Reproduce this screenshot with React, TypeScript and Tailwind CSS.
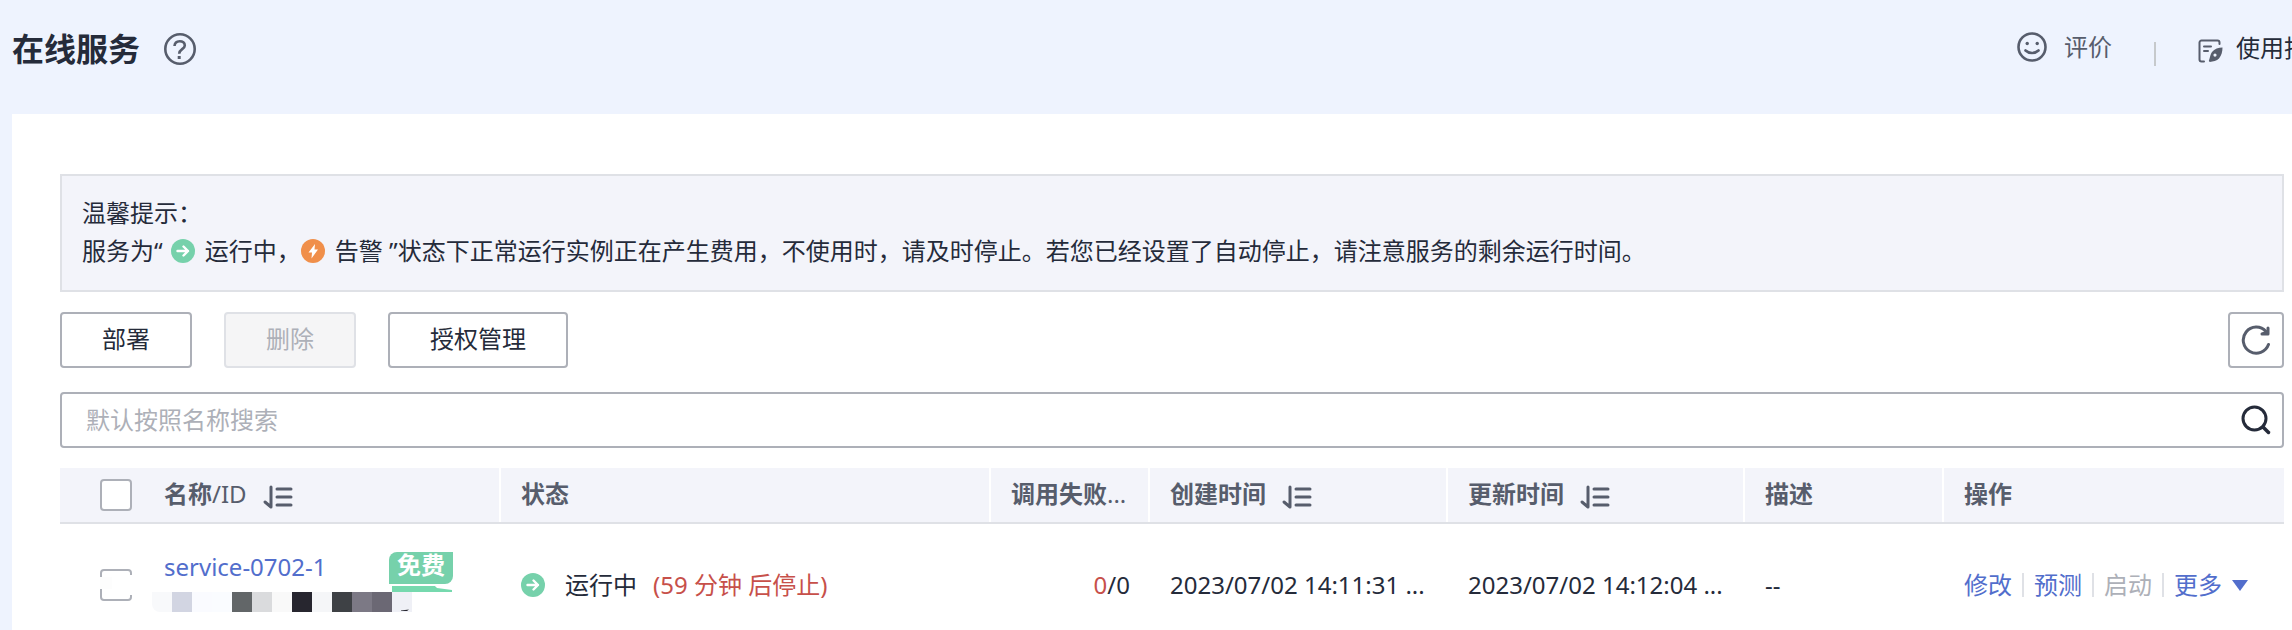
import React, { useState } from 'react';

const COLUMNS = [
  { key: 'status', title: '状态', sortable: false },
  { key: 'failed', title: '调用失败', sortable: false },
  { key: 'created', title: '创建时间', sortable: true },
  { key: 'updated', title: '更新时间', sortable: true },
  { key: 'desc', title: '描述', sortable: false },
  { key: 'action', title: '操作', sortable: false },
];

// 脱敏后的 ID 色块
const MASK_BLOCKS = [
  '#f8f9fb', '#d2d5e2', '#fafbff', '#fafcff', '#626668', '#dadbdd', '#f9f9f9',
  '#27262f', '#f5f6f8', '#3e4145', '#7c7985', '#6b6874',
];

const RunningIcon: React.FC = () => (
  <svg className="w-6 h-6 shrink-0" viewBox="0 0 24 24" fill="none" aria-hidden="true">
    <circle cx="12" cy="12" r="12" fill="#76d1ab" />
    <path d="M6.500 12h10.500M12.500 7.500 17 12l-4.500 4.500" stroke="#fff" strokeWidth="2.400" strokeLinecap="round" strokeLinejoin="round" />
  </svg>
);

const AlarmIcon: React.FC = () => (
  <svg className="w-6 h-6 shrink-0" viewBox="0 0 24 24" aria-hidden="true">
    <circle cx="12" cy="12" r="12" fill="#f08f4a" />
    <path d="M14 5 7.500 13.500h3.500L10.500 19.500 17 10.500h-3.500z" fill="#fff" />
  </svg>
);

const SortIcon: React.FC = () => (
  <svg className="w-8 h-6 mt-1" viewBox="0 0 32 24" fill="none" stroke="#575d6c" strokeWidth="3" strokeLinecap="round" strokeLinejoin="round" aria-hidden="true">
    <path d="M10 2v20L4 17" />
    <path d="M16 4h14M16 12h14M16 20h14" />
  </svg>
);

const Divider: React.FC = () => <span className="w-[2px] h-6 bg-[#dfe1e6]"></span>;

const App: React.FC = () => {
  const [keyword, setKeyword] = useState('');

  return (
    <div className="min-h-screen flex flex-col overflow-hidden bg-[#eef3fe] pl-3 text-2xl text-[#252b3a] font-['Noto_Sans','Noto_Sans_CJK_SC',sans-serif]">
      {/* 顶部 */}
      <header className="h-[114px] pt-6 flex items-start justify-between">
        <div className="flex items-center h-[50px] gap-6">
          <h1 className="text-[32px] leading-12 font-bold">在线服务</h1>
          <button type="button" aria-label="帮助">
            <svg className="w-8 h-8" viewBox="0 0 32 32" fill="none" stroke="#575d6c" strokeWidth="2.600" aria-hidden="true">
              <circle cx="16" cy="16" r="14.700" />
              <path d="M10.500 13c.2-3 2.200-4.800 5.200-4.800s5.100 1.700 5.100 4.200c0 3.800-5.600 3.800-5.600 8.300" />
              <path d="M13.700 24.500h3" strokeWidth="3" />
            </svg>
          </button>
        </div>
        <div className="flex items-center h-12 shrink-0">
          <button type="button" className="flex items-center gap-4 pb-[2px] text-[#575d6c]">
            <svg className="w-8 h-8" viewBox="0 0 32 32" fill="none" stroke="#575d6c" strokeWidth="2.600" strokeLinecap="round" aria-hidden="true">
              <circle cx="16" cy="16" r="13.500" />
              <path d="M9.500 19.500c3.500 3.300 9.500 3.300 13 0" />
              <circle cx="11.200" cy="12.500" r="1.700" fill="#575d6c" stroke="none" />
              <circle cx="21.200" cy="12.500" r="1.700" fill="#575d6c" stroke="none" />
            </svg>
            评价
          </button>
          <span className="w-[2px] h-6 mt-3 mx-[42px] bg-[#c6c9cc]"></span>
          <a href="#guide" className="flex items-center gap-3 w-[94px] whitespace-nowrap">
            <svg className="w-[26px] h-6 mt-[6px] shrink-0" viewBox="0 0 26 24" fill="none" aria-hidden="true">
              <path d="M6 22.500H3.500a2 2 0 0 1-2-2v-17a2 2 0 0 1 2-2h16a2 2 0 0 1 2 2V5" stroke="#575d6c" strokeWidth="2" strokeLinecap="round" />
              <path d="M6 7.500h7M6 12h4" stroke="#575d6c" strokeWidth="2" strokeLinecap="round" />
              <path fillRule="evenodd" d="M24.500 8.500c-4 0-8 1.200-10.500 4.500-1.600 2.200-2 5.500-3.200 9l1 1c3.200-.7 7-1 9.200-3.500 2.500-3 3.500-7 3.500-11zM17 14.500a1.600 1.600 0 1 1 0 3.200 1.600 1.600 0 0 1 0-3.200z" fill="#575d6c" />
            </svg>
            使用指南
          </a>
        </div>
      </header>

      <main className="flex-1 bg-white pl-12 pr-2 pt-[60px]">
        <section className="h-[118px] px-5 pt-[18px] border-2 border-[#dfe1e6] bg-[#f3f4fa] leading-[38px]">
          <p>温馨提示：</p>
          <p className="flex items-center whitespace-pre">
            服务为“ <span className="ml-[2px]"><RunningIcon /></span>
            <span className="ml-[10px]">运行中，</span>
            <AlarmIcon />
            <span className="ml-[10px]">告警 ”状态下正常运行实例正在产生费用，不使用时，请及时停止。若您已经设置了自动停止，请注意服务的剩余运行时间。</span>
          </p>
        </section>

        {/* 工具栏 */}
        <div className="mt-5 flex items-center gap-8">
          <button type="button" className="h-14 px-10 pb-[2px] border-2 border-[#adb0b8] rounded bg-white">部署</button>
          <button type="button" disabled className="h-14 px-10 pb-[2px] border-2 border-[#dfe1e6] rounded bg-[#f5f5f6] text-[#adb0b8]">删除</button>
          <button type="button" className="h-14 px-10 pb-[2px] border-2 border-[#adb0b8] rounded bg-white">授权管理</button>
          <button type="button" aria-label="刷新" className="ml-auto w-14 h-14 flex items-center justify-center border-2 border-[#adb0b8] rounded">
            <svg className="w-8 h-8" viewBox="0 0 32 32" fill="none" stroke="#575d6c" strokeWidth="3" strokeLinecap="round" strokeLinejoin="round" aria-hidden="true">
              <path d="M28.500 20.500A13 13 0 1 1 26 7.500" />
              <path d="M28 4v6h-6l6-2" />
            </svg>
          </button>
        </div>

        <div className="mt-6 h-14 flex items-center border-2 border-[#adb0b8] rounded">
          <input
            type="text"
            aria-label="搜索"
            value={keyword}
            onChange={(e) => setKeyword(e.target.value)}
            placeholder="默认按照名称搜索"
            className="flex-1 h-full pl-6 pb-[2px] outline-none placeholder:text-[#adb0b8]"
          />
          <button type="button" aria-label="查询" className="px-[10px]">
            <svg className="w-8 h-8" viewBox="0 0 32 32" fill="none" stroke="#252b3a" strokeWidth="3" strokeLinecap="round" aria-hidden="true">
              <circle cx="14.500" cy="14.500" r="11.500" />
              <path d="m23 23 5.500 5.500" strokeWidth="3.500" />
            </svg>
          </button>
        </div>

        {/* 服务列表 */}
        <table className="mt-5 w-full table-fixed border-separate border-spacing-0 text-left whitespace-nowrap">
          <colgroup>
            <col className="w-[104px]" />
            <col className="w-[337px]" />
            <col className="w-[490px]" />
            <col className="w-[159px]" />
            <col className="w-[298px]" />
            <col className="w-[297px]" />
            <col className="w-[199px]" />
            <col />
          </colgroup>
          <thead>
            <tr className="h-14 bg-[#f3f4fa] text-[#575d6c]">
              <th className="p-0 pl-10 border-b-2 border-[#dfe1e6]">
                <input type="checkbox" aria-label="全选" className="block w-8 h-8 appearance-none border-2 border-[#adb0b8] rounded bg-white" />
              </th>
              <th className="p-0 font-bold border-b-2 border-[#dfe1e6]">
                <div className="flex items-center justify-between">
                  <button type="button" className="flex items-center gap-[14px]">
                    <span className="pb-[2px]">名称<span className="font-normal">/ID</span></span>
                    <SortIcon />
                  </button>
                  <span className="w-[2px] h-[54px] bg-white"></span>
                </div>
              </th>
              {COLUMNS.map((col, idx) => (
                <th key={col.key} className="p-0 font-bold border-b-2 border-[#dfe1e6]">
                  <div className="flex items-center justify-between h-[54px] pl-5">
                    {col.sortable ? (
                      <button type="button" className="flex items-center gap-[14px]">
                        <span className="pb-[2px]">{col.title}</span>
                        <SortIcon />
                      </button>
                    ) : (
                      <span className="pb-[2px]">
                        {col.title}
                        {col.key === 'failed' && <span className="font-normal">...</span>}
                      </span>
                    )}
                    {idx < COLUMNS.length - 1 && <span className="w-[2px] h-[54px] bg-white"></span>}
                  </div>
                </th>
              ))}
            </tr>
          </thead>
          <tbody>
            <tr className="h-[122px]">
              <td className="p-0 pl-10">
                <div className="relative w-8">
                  <input type="checkbox" aria-label="选择 service-0702-1" className="block w-8 h-8 appearance-none border-2 border-[#adb0b8] rounded bg-white" />
                  <span className="absolute top-2 left-0 w-3 h-3 bg-[#fdfdfd] pointer-events-none"></span>
                  <span className="absolute top-[6px] right-0 w-3 h-5 bg-white pointer-events-none"></span>
                </div>
              </td>
              <td className="p-0 pt-7 align-top">
                <div className="flex items-start pr-12 h-10">
                  <div className="flex-1">
                    <a href="#service-0702-1" className="block leading-[30px] text-[#526ecc]">service-0702-1</a>
                  </div>
                  <div className="w-16 flex flex-col gap-[2px]">
                    <span className="h-8 leading-[26px] text-center font-bold text-white bg-[#76d1ab] rounded-tl-lg rounded-br-lg">免费</span>
                    <svg className="w-16 h-[6px]" viewBox="0 0 64 6" fill="#76d9ae" aria-hidden="true">
                      <path d="M3 0h35q6-3 10 2l15 2v2H3z" />
                    </svg>
                  </div>
                </div>
                <div className="flex -ml-3 h-5 overflow-hidden rounded-bl-lg" aria-hidden="true">
                  {MASK_BLOCKS.map((color, idx) => (
                    <span key={idx} className="w-5 h-5" style={{ backgroundColor: color }}></span>
                  ))}
                  <svg className="w-5 h-5 bg-[#eff0f6]" viewBox="0 0 20 20" fill="#27262f">
                    <path d="M9 18.500 17 17.500 15 19H9z" />
                  </svg>
                </div>
              </td>
              <td className="p-0 pl-5">
                <div className="flex items-center">
                  <RunningIcon />
                  <span className="ml-5">运行中</span>
                  <span className="ml-4 text-[#c7504a]">(59 分钟 后停止)</span>
                </div>
              </td>
              <td className="p-0 pr-5 text-right"><span className="text-[#c7504a]">0</span>/0</td>
              <td className="p-0 pl-5">2023/07/02 14:11:31 ...</td>
              <td className="p-0 pl-5">2023/07/02 14:12:04 ...</td>
              <td className="p-0 pl-5">--</td>
              <td className="p-0 pl-5">
                <div className="flex items-center gap-[10px] text-[#526ecc]">
                  <a href="#edit">修改</a>
                  <Divider />
                  <a href="#predict">预测</a>
                  <Divider />
                  <button type="button" disabled className="text-[#adb0b8]">启动</button>
                  <Divider />
                  <button type="button" className="flex items-center gap-[10px]">
                    更多
                    <svg className="w-4 h-3" viewBox="0 0 16 12" fill="#526ecc" aria-hidden="true">
                      <path d="M0 1h16L8 12z" />
                    </svg>
                  </button>
                </div>
              </td>
            </tr>
          </tbody>
        </table>
      </main>
    </div>
  );
};

export default App;
